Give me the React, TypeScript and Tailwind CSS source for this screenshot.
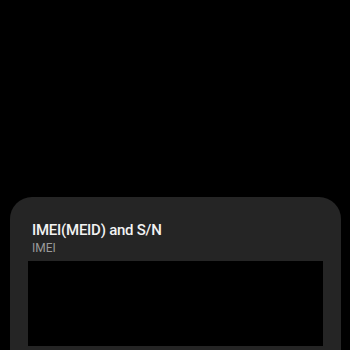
const App = () => {
  return (
    <div
      className="h-[350px] w-[350px] overflow-hidden bg-black pt-[197px]"
      style={{ fontFamily: "Roboto, 'Noto Sans', sans-serif" }}
    >
      <div className="ml-[10px] mr-[9px] h-[200px] rounded-t-[22px] bg-[#252525] px-[18px] pt-[23px]">
        <div className="pl-[4px]">
          <h2 className="text-[15px] font-medium leading-[20px] tracking-[-0.25px] text-[#f2f2f2]">
            IMEI(MEID) and S/N
          </h2>
          <p className="text-[12px] leading-[16px] text-[#9b9b9b]">IMEI</p>
        </div>
        <div className="mt-[5px] h-[85px] bg-black" />
      </div>
    </div>
  );
};

export default App;
